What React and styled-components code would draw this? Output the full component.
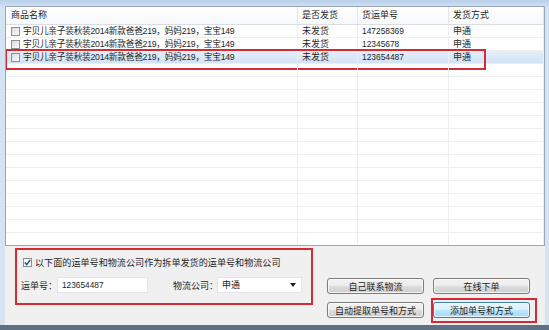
import React from 'react'
import styled, {createGlobalStyle, css} from 'styled-components'

const GlobalStyle = createGlobalStyle`
  html, body {
    margin: 0;
    padding: 0;
    background: #cddcec;
  }
  * { box-sizing: border-box; }
`

const FONT = `"Liberation Sans", "Noto Sans CJK SC", sans-serif`

const orders = [
  {name: '宇贝儿亲子装秋装2014新款爸爸219，妈妈219，宝宝149', shipped: '未发货', no: '147258369', way: '申通'},
  {name: '宇贝儿亲子装秋装2014新款爸爸219，妈妈219，宝宝149', shipped: '未发货', no: '12345678', way: '申通'},
  {name: '宇贝儿亲子装秋装2014新款爸爸219，妈妈219，宝宝149', shipped: '未发货', no: '123654487', way: '申通', selected: true},
]

const App = () => {
  const fillers = Array.from({length: 15})

  return (
    <Frame>
      <GlobalStyle />
      <ListView>
        <HeaderRow>
          <HeadCell>商品名称</HeadCell>
          <HeadCell>是否发货</HeadCell>
          <HeadCell>货运单号</HeadCell>
          <HeadCell>发货方式</HeadCell>
        </HeaderRow>
        {orders.map((o, i) => (
          <Row key={i} $selected={o.selected}>
            <Cell>
              <RowCheck />
              <Name>{o.name}</Name>
            </Cell>
            <Cell>{o.shipped}</Cell>
            <Cell $num>{o.no}</Cell>
            <Cell>{o.way}</Cell>
          </Row>
        ))}
        {fillers.map((_, i) => (
          <Row key={'f' + i}>
            <Cell /><Cell /><Cell /><Cell />
          </Row>
        ))}
      </ListView>
      <Panel>
        <SplitGroup>
          <CheckLine>
            <CheckBox>
              <svg width="7" height="7" viewBox="0 0 7 7">
                <path d="M0.8 3.6 L2.7 5.6 L6.2 1.0" fill="none" stroke="#2a4d8a" strokeWidth="1.4" />
              </svg>
            </CheckBox>
            以下面的运单号和物流公司作为拆单发货的运单号和物流公司
          </CheckLine>
          <FieldLine>
            <Label>运单号：</Label>
            <TextInput>123654487</TextInput>
            <Label $gap>物流公司：</Label>
            <Select>
              申通
              <Arrow />
            </Select>
          </FieldLine>
        </SplitGroup>
        <Buttons>
          <Button>自己联系物流</Button>
          <Button>在线下单</Button>
          <Button>自动提取单号和方式</Button>
          <Button $primary $marked>添加单号和方式</Button>
        </Buttons>
      </Panel>
    </Frame>
  )
}

export default App

const Frame = styled.div`
  width: 549px;
  height: 330px;
  display: flex;
  flex-direction: column;
  padding: 6px 4px 0 5px;
  background: linear-gradient(#b9d0ea, #d3e3f3 8px, #d6e4f2);
  border-bottom: 5px solid #5f6f84;
  font-family: ${FONT};
  color: #1e1e1e;
  overflow: hidden;
`

const ListView = styled.div`
  height: 240px;
  background: #fff;
  border: 1px solid #98a6b6;
  overflow: hidden;
  flex-shrink: 0;
`

const columns = css`
  display: grid;
  grid-template-columns: 292px 60px 91px 1fr;
`

const HeaderRow = styled.div`
  ${columns};
  height: 18px;
  border-bottom: 1px solid #dadde2;
  background: linear-gradient(#ffffff, #f7f8fa);
`

const HeadCell = styled.div`
  font-size: 9px;
  line-height: 17px;
  padding-left: 4px;
  border-right: 1px solid #e4e6ea;
  &:first-child { padding-left: 5px; }
`

const Row = styled.div`
  ${columns};
  position: relative;
  height: 13px;
  border-bottom: 1px solid #eeeeee;
  ${p => p.$selected && css`
    background: linear-gradient(#e6eff9, #d3e2f4);
    &::after {
      content: '';
      position: absolute;
      left: -1px;
      top: -2px;
      width: 477px;
      height: 17px;
      border: 2px solid #d52a33;
    }
  `}
`

const Cell = styled.div`
  display: flex;
  align-items: center;
  font-size: ${p => (p.$num ? '8.4px' : '9px')};
  line-height: 12px;
  padding-left: 4px;
  white-space: nowrap;
  border-right: 1px solid #efefef;
  &:first-child { padding-left: 5px; }
`

const Name = styled.span`
  font-size: 8.7px;
  letter-spacing: -0.25px;
`

const RowCheck = styled.span`
  width: 9px;
  height: 9px;
  margin-right: 3px;
  border: 1px solid #8e8f8f;
  background: linear-gradient(135deg, #dcdcdc, #fbfbfb);
  flex-shrink: 0;
`

const Panel = styled.div`
  flex: 1;
  display: flex;
  align-items: flex-start;
  padding: 2px 0 0 10px;
  background: #f0f0f0;
`

const SplitGroup = styled.div`
  width: 298px;
  height: 57px;
  border: 2px solid #d52a33;
  padding: 6px 0 0 4px;
`

const CheckLine = styled.div`
  display: flex;
  align-items: center;
  height: 12px;
  font-size: 9.1px;
  white-space: nowrap;
`

const CheckBox = styled.span`
  width: 9px;
  height: 9px;
  margin: 0 3px 0 2px;
  border: 1px solid #8e8f8f;
  background: #f4f6f9;
  display: flex;
  align-items: center;
  justify-content: center;
`

const FieldLine = styled.div`
  display: flex;
  align-items: center;
  margin-top: 9px;
  height: 16px;
`

const Label = styled.span`
  font-size: 9px;
  white-space: nowrap;
  width: ${p => (p.$gap ? '44px' : '36px')};
  margin-left: ${p => (p.$gap ? '25px' : '0')};
`

const TextInput = styled.div`
  width: 91px;
  height: 16px;
  background: #fff;
  border: 1px solid #e2e5e9;
  font-size: 8.3px;
  line-height: 14px;
  padding-left: 4px;
`

const Select = styled.div`
  width: 85px;
  height: 16px;
  background: #fff;
  border: 1px solid #e2e5e9;
  font-size: 9px;
  line-height: 14px;
  padding: 0 5px 0 4px;
  display: flex;
  align-items: center;
  justify-content: space-between;
`

const Arrow = styled.span`
  width: 0;
  height: 0;
  border-left: 3px solid transparent;
  border-right: 3px solid transparent;
  border-top: 4px solid #222;
`

const Buttons = styled.div`
  display: grid;
  grid-template-columns: 97px 97px;
  grid-auto-rows: 16px;
  column-gap: 9px;
  row-gap: 8px;
  margin: 30px 0 0 14px;
`

const Button = styled.div`
  position: relative;
  display: flex;
  align-items: center;
  justify-content: center;
  font-size: 9px;
  border: 1px solid #7c7c7c;
  border-radius: 3px;
  white-space: nowrap;
  background: linear-gradient(#f3f3f3, #ebebeb 50%, #dddddd 51%, #cfcfcf);
  box-shadow: inset 0 0 0 1px rgba(255, 255, 255, 0.7);
  ${p => p.$primary && css`
    border-color: #3c7fb1;
    background: linear-gradient(#eaf6fd, #d9f0fc 50%, #bee6fd 51%, #a7d9f5);
  `}
  ${p => p.$marked && css`
    &::after {
      content: '';
      position: absolute;
      left: -3px;
      top: -5px;
      right: -8px;
      bottom: -6px;
      border: 2px solid #d52a33;
    }
  `}
`
